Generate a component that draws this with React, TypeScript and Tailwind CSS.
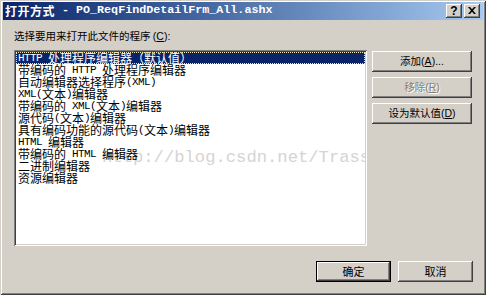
import React from "react";

const items = [
  "HTTP 处理程序编辑器（默认值）",
  "带编码的 HTTP 处理程序编辑器",
  "自动编辑器选择程序(XML)",
  "XML(文本)编辑器",
  "带编码的 XML(文本)编辑器",
  "源代码(文本)编辑器",
  "具有编码功能的源代码(文本)编辑器",
  "HTML 编辑器",
  "带编码的 HTML 编辑器",
  "二进制编辑器",
  "资源编辑器",
];

function Mixed({ text }: { text: string }) {
  const parts = text.split(/([\x00-\x7f]+)/).filter((p) => p.length > 0);
  return (
    <>
      {parts.map((p, i) =>
        /^[\x00-\x7f]+$/.test(p) ? (
          <span
            key={i}
            className="font-['Liberation_Mono',monospace] text-[11px] tracking-[-0.6px] whitespace-pre"
          >
            {p}
          </span>
        ) : (
          <span key={i} className="font-['Noto_Sans_CJK_SC',sans-serif] text-[12px]">
            {p}
          </span>
        )
      )}
    </>
  );
}

function Mn({ pre, k, post }: { pre: string; k: string; post?: string }) {
  return (
    <span className="whitespace-pre">
      <span className="font-['Noto_Sans_CJK_SC',sans-serif]">{pre}</span>
      <span className="font-['Liberation_Sans',sans-serif]">
        (<span className="underline underline-offset-1">{k}</span>){post ?? ""}
      </span>
    </span>
  );
}

const raised =
  "shadow-[inset_-1px_-1px_0_#404040,inset_1px_1px_0_#ffffff,inset_-2px_-2px_0_#808080,inset_2px_2px_0_#d4d0c8]";

function Btn({ children, disabled }: { children: React.ReactNode; disabled?: boolean }) {
  return (
    <div
      className={`h-[21px] w-[100px] flex items-center justify-center bg-[#d4d0c8] text-[10.5px] leading-none ${raised} ${
        disabled ? "text-[#808080] [text-shadow:1px_1px_0_#ffffff]" : "text-black"
      }`}
    >
      {children}
    </div>
  );
}

export default function App() {
  return (
    <div className="w-[486px] h-[295px] bg-[#d4d0c8] flex flex-col p-[3px] pt-[2px] shadow-[inset_1px_1px_0_#d4d0c8,inset_-1px_-1px_0_#404040,inset_2px_2px_0_#ffffff,inset_-2px_-2px_0_#808080] select-none">
      {/* Title bar */}
      <div className="h-[18px] flex items-center bg-gradient-to-r from-[#0a246a] to-[#a6caf0] pl-[2px] pr-[3px]">
        <div className="flex-1 flex items-center text-white font-bold whitespace-pre leading-none">
          <span className="font-['Noto_Sans_CJK_SC',sans-serif] text-[12px] tracking-[0.5px]">打开方式</span>
          <span className="font-['Liberation_Mono',monospace] text-[11.7px]"> - PO_ReqFindDetailFrm_All.ashx</span>
        </div>
        <div className="flex gap-[2px]">
          <div className={`w-[16px] h-[14px] bg-[#d4d0c8] ${raised} flex items-center justify-center`}>
            <span className="font-['Liberation_Sans',sans-serif] font-bold text-[12px] leading-none text-black -mt-[1px]">?</span>
          </div>
          <div className={`w-[16px] h-[14px] bg-[#d4d0c8] ${raised} flex items-center justify-center`}>
            <svg width="8" height="7" viewBox="0 0 8 7" className="-mt-[1px]">
              <path d="M0 0h2l2 2.3L6 0h2L5 3.5 8 7H6L4 4.7 2 7H0l3-3.5z" fill="#000" />
            </svg>
          </div>
        </div>
      </div>

      {/* Content */}
      <div className="flex flex-col pl-[11px]">
        <div className="mt-[10px] h-[13px] flex items-center text-[10.5px] leading-none text-black whitespace-pre">
          <span className="font-['Noto_Sans_CJK_SC',sans-serif]">选择要用来打开此文件的程序 </span>
          <span className="font-['Liberation_Sans',sans-serif]">
            (<span className="underline underline-offset-1">C</span>):
          </span>
        </div>

        <div className="mt-[7px] flex gap-[5px]">
          {/* Listbox */}
          <div className="relative w-[353px] h-[196px] bg-white p-[2px] overflow-hidden shadow-[inset_1px_1px_0_#808080,inset_-1px_-1px_0_#ffffff,inset_2px_2px_0_#404040,inset_-2px_-2px_0_#d4d0c8]">
            <div className="absolute left-[88px] top-[99px] right-[2px] overflow-hidden font-['Liberation_Mono',monospace] text-[17.2px] leading-[18px] text-[#d4d4d4] whitespace-pre pointer-events-none">
              http://blog.csdn.net/Trassion
            </div>
            <div className="relative flex flex-col">
              {items.map((t, i) => (
                <div
                  key={i}
                  className={`h-[12px] leading-[12px] pl-[2px] whitespace-pre flex items-center ${
                    i === 0
                      ? "bg-[#0a246a] text-white outline-1 outline-dotted outline-[#f0e6b4] -outline-offset-1"
                      : "text-black"
                  }`}
                >
                  <Mixed text={t} />
                </div>
              ))}
            </div>
          </div>

          {/* Right buttons */}
          <div className="mt-[1px] flex flex-col gap-[5px]">
            <Btn>
              <Mn pre="添加" k="A" post="..." />
            </Btn>
            <Btn disabled>
              <Mn pre="移除" k="R" />
            </Btn>
            <Btn>
              <Mn pre="设为默认值" k="D" />
            </Btn>
          </div>
        </div>

        {/* Bottom buttons */}
        <div className="mt-[15px] flex justify-end gap-[7px] pr-[10px]">
          <div className="w-[75px] h-[21px] flex items-center justify-center bg-[#d4d0c8] text-black text-[11px] leading-none font-['Noto_Sans_CJK_SC',sans-serif] shadow-[inset_0_0_0_1px_#000000,inset_-2px_-2px_0_#404040,inset_2px_2px_0_#ffffff,inset_-3px_-3px_0_#808080]">
            确定
          </div>
          <div className={`w-[75px] h-[21px] flex items-center justify-center bg-[#d4d0c8] text-black text-[11px] leading-none font-['Noto_Sans_CJK_SC',sans-serif] ${raised}`}>
            取消
          </div>
        </div>
      </div>
    </div>
  );
}
